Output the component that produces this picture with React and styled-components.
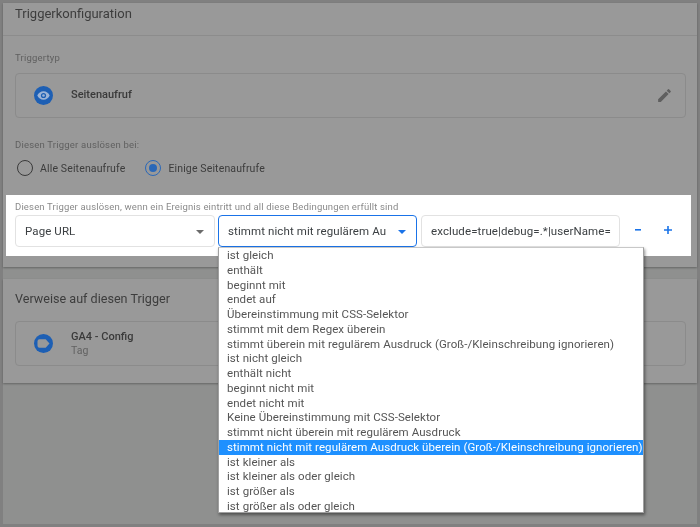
import React from "react";
import styled, { createGlobalStyle } from "styled-components";

const Global = createGlobalStyle`
  html, body { margin: 0; padding: 0; }
  body { font-family: Roboto, "Liberation Sans", sans-serif; background: #808080; }
`;

const Frame = styled.div`
  box-sizing: border-box;
  width: 700px;
  height: 527px;
  padding: 3px;
  background: #808080;
  overflow: hidden;
  filter: blur(0.3px);
`;
const Page = styled.div`
  height: 521px;
  background: #8f908f;
  display: flex;
  flex-direction: column;
  gap: 12px;
`;
const Card = styled.section`
  background: #999999;
  box-shadow: 0 1px 2px rgba(0, 0, 0, 0.3);
`;
const CardHeader = styled.h2`
  margin: 0;
  box-sizing: border-box;
  padding: ${(p) => (p.$plain ? "9px" : "0")} 12px 0;
  height: ${(p) => (p.$plain ? 34 : 33)}px;
  font-size: ${(p) => (p.$plain ? 12.6 : 13)}px;
  font-weight: 400;
  line-height: 21px;
  color: #3d3d3d;
  border-bottom: ${(p) => (p.$plain ? "0" : "1px solid #8c8c8c")};
`;
const CardBody = styled.div`
  padding: ${(p) => (p.$plain ? "0 11px 17px 12px" : "15px 11px 11px 12px")};
`;
const Label = styled.div`
  font-size: 9.5px;
  line-height: 14px;
  margin-top: ${(p) => p.$top || 0}px;
  letter-spacing: ${(p) => (p.$light ? 0.16 : 0.2)}px;
  color: ${(p) => (p.$light ? "#8a8a8a" : "#606060")};
`;
const InfoBox = styled.div`
  box-sizing: border-box;
  height: 45px;
  margin-top: 8px;
  border: 1px solid #8b8b8b;
  border-radius: 4px;
  display: flex;
  align-items: center;
  padding: 0 12px 0 18px;
`;
const BoxText = styled.div`
  margin-left: 18px;
  padding-bottom: ${(p) => (p.$raised ? 2 : 0)}px;
  flex: 1;
`;
const BoxTitle = styled.div`
  font-size: 11px;
  line-height: 14px;
  font-weight: 500;
  color: #3a3a3a;
`;
const BoxSub = styled.div`
  font-size: 10.5px;
  line-height: 14px;
  color: #626262;
`;
const RadioRow = styled.div`
  display: flex;
  align-items: center;
  margin-top: 8px;
  height: 16px;
`;
const RadioItem = styled.div`
  display: flex;
  align-items: center;
  gap: 7px;
  margin-left: ${(p) => p.$left}px;
  font-size: 10.5px;
  letter-spacing: 0.14px;
  color: #3c3c3c;
`;
const RadioMark = styled.span`
  box-sizing: border-box;
  width: 16px;
  height: 16px;
  border-radius: 50%;
  border: 1.5px solid ${(p) => (p.$on ? "#2a68b8" : "#3a3a3a")};
  display: flex;
  align-items: center;
  justify-content: center;
  &::after {
    content: "";
    width: 8px;
    height: 8px;
    border-radius: 50%;
    background: ${(p) => (p.$on ? "#2a68b8" : "transparent")};
  }
`;
const Spotlight = styled.div`
  margin: 19px -5px 0 -9px;
  height: 61px;
  box-sizing: border-box;
  padding: 5px 9px 0;
  background: #ffffff;
`;
const Controls = styled.div`
  display: flex;
  align-items: flex-start;
  margin-top: 1px;
`;
const Field = styled.div`
  position: relative;
  box-sizing: border-box;
  flex: none;
  width: ${(p) => p.$w}px;
  height: 32px;
  margin-right: ${(p) => p.$gap}px;
  border: ${(p) => (p.$active ? "1.5px solid #1a73e8" : "1px solid #e2e2e2")};
  border-radius: 4px;
  display: flex;
  align-items: center;
  padding-left: 9px;
  font-size: 11.5px;
  letter-spacing: 0.1px;
  color: #3c4043;
  white-space: nowrap;
`;
const FieldText = styled.span`
  flex: 1;
`;
const Caret = styled.span`
  width: 0;
  height: 0;
  margin: 1px 10px 0 8px;
  border-left: 4px solid transparent;
  border-right: 4px solid transparent;
  border-top: 4px solid ${(p) => p.$color};
`;
const Menu = styled.ul`
  position: absolute;
  top: 31px;
  left: -1.5px;
  width: 426px;
  height: 266px;
  box-sizing: border-box;
  margin: 0;
  padding: 0;
  list-style: none;
  background: #ffffff;
  border: 1px solid #a0a0a0;
  border-top-color: #c8c8c8;
  box-shadow: 1px 2px 3px rgba(0, 0, 0, 0.45);
  z-index: 5;
`;
const MenuItem = styled.li`
  height: 14.75px;
  line-height: 14.75px;
  padding-left: 8.5px;
  font-size: 11.5px;
  letter-spacing: 0.07px;
  color: ${(p) => (p.$selected ? "#ffffff" : "#555555")};
  background: ${(p) => (p.$selected ? "#1e90ff" : "transparent")};
  white-space: nowrap;
`;
const IconBtn = styled.span`
  flex: none;
  width: 30px;
  height: 29px;
  display: flex;
  align-items: center;
  justify-content: center;
`;

const Badge = ({ children }) => (
  <svg width="19" height="19" viewBox="0 0 19 19" aria-hidden="true">
    <circle cx="9.5" cy="9.5" r="9.5" fill="#1d5fb4" />
    {children}
  </svg>
);

const options = [
  "ist gleich",
  "enthält",
  "beginnt mit",
  "endet auf",
  "Übereinstimmung mit CSS-Selektor",
  "stimmt mit dem Regex überein",
  "stimmt überein mit regulärem Ausdruck (Groß-/Kleinschreibung ignorieren)",
  "ist nicht gleich",
  "enthält nicht",
  "beginnt nicht mit",
  "endet nicht mit",
  "Keine Übereinstimmung mit CSS-Selektor",
  "stimmt nicht überein mit regulärem Ausdruck",
  "stimmt nicht mit regulärem Ausdruck überein (Groß-/Kleinschreibung ignorieren)",
  "ist kleiner als",
  "ist kleiner als oder gleich",
  "ist größer als",
  "ist größer als oder gleich",
];

export default function App() {
  return (
    <Frame>
      <Global />
      <Page>
        <Card>
          <CardHeader>Triggerkonfiguration</CardHeader>
          <CardBody>
            <Label>Triggertyp</Label>
            <InfoBox>
              <Badge>
                <path d="M9.500 5.200C6.800 5.200 4.400 7 3.300 9.500c1.100 2.500 3.500 4.300 6.200 4.300s5.100-1.800 6.200-4.300c-1.100-2.500-3.500-4.300-6.200-4.300z" fill="#9db4d6" />
                <circle cx="9.5" cy="9.5" r="2.6" fill="#1d5fb4" />
                <circle cx="9.5" cy="9.5" r="1.3" fill="#9db4d6" />
              </Badge>
              <BoxText $raised>
                <BoxTitle>Seitenaufruf</BoxTitle>
              </BoxText>
              <svg width="17" height="17" viewBox="0 0 24 24" aria-hidden="true">
                <path fill="#5f5f5f" d="M3 17.250V21h3.750L17.810 9.940l-3.750-3.750L3 17.250zM20.710 7.040a1 1 0 0 0 0-1.410l-2.340-2.340a1 1 0 0 0-1.410 0l-1.830 1.830 3.750 3.750 1.830-1.830z" />
              </svg>
            </InfoBox>
            <Label $top={20}>Diesen Trigger auslösen bei:</Label>
            <RadioRow>
              <RadioItem $left={2}>
                <RadioMark />
                Alle Seitenaufrufe
              </RadioItem>
              <RadioItem $left={20}>
                <RadioMark $on />
                Einige Seitenaufrufe
              </RadioItem>
            </RadioRow>
            <Spotlight>
              <Label $light>Diesen Trigger auslösen, wenn ein Ereignis eintritt und all diese Bedingungen erfüllt sind</Label>
              <Controls>
                <Field $w={200} $gap={3}>
                  <FieldText>Page URL</FieldText>
                  <Caret $color="#6b6b6b" />
                </Field>
                <Field $w={199} $gap={4} $active>
                  <FieldText>stimmt nicht mit regulärem Au</FieldText>
                  <Caret $color="#1a73e8" />
                  <Menu>
                    {options.map((o, i) => (
                      <MenuItem key={o} $selected={i === 13}>{o}</MenuItem>
                    ))}
                  </Menu>
                </Field>
                <Field $w={199} $gap={3}>
                  <FieldText>exclude=true|debug=.*|userName=</FieldText>
                </Field>
                <IconBtn>
                  <svg width="8" height="8" viewBox="0 0 8 8" aria-hidden="true">
                    <path d="M1 3h6v1.600H1z" fill="#1a73e8" />
                  </svg>
                </IconBtn>
                <IconBtn>
                  <svg width="8" height="8" viewBox="0 0 8 8" aria-hidden="true">
                    <path d="M3.200 0h1.600v3.200H8v1.600H4.800V8H3.200V4.800H0V3.200h3.200z" fill="#1a73e8" />
                  </svg>
                </IconBtn>
              </Controls>
            </Spotlight>
          </CardBody>
        </Card>
        <Card>
          <CardHeader $plain>Verweise auf diesen Trigger</CardHeader>
          <CardBody $plain>
            <InfoBox>
              <Badge>
                <path d="M5.500 5.300h6.200l3.800 4.200-3.800 4.200H5.500a2 2 0 0 1-2-2V7.300a2 2 0 0 1 2-2z" fill="#999999" />
              </Badge>
              <BoxText>
                <BoxTitle>GA4 - Config</BoxTitle>
                <BoxSub>Tag</BoxSub>
              </BoxText>
            </InfoBox>
          </CardBody>
        </Card>
      </Page>
    </Frame>
  );
}
